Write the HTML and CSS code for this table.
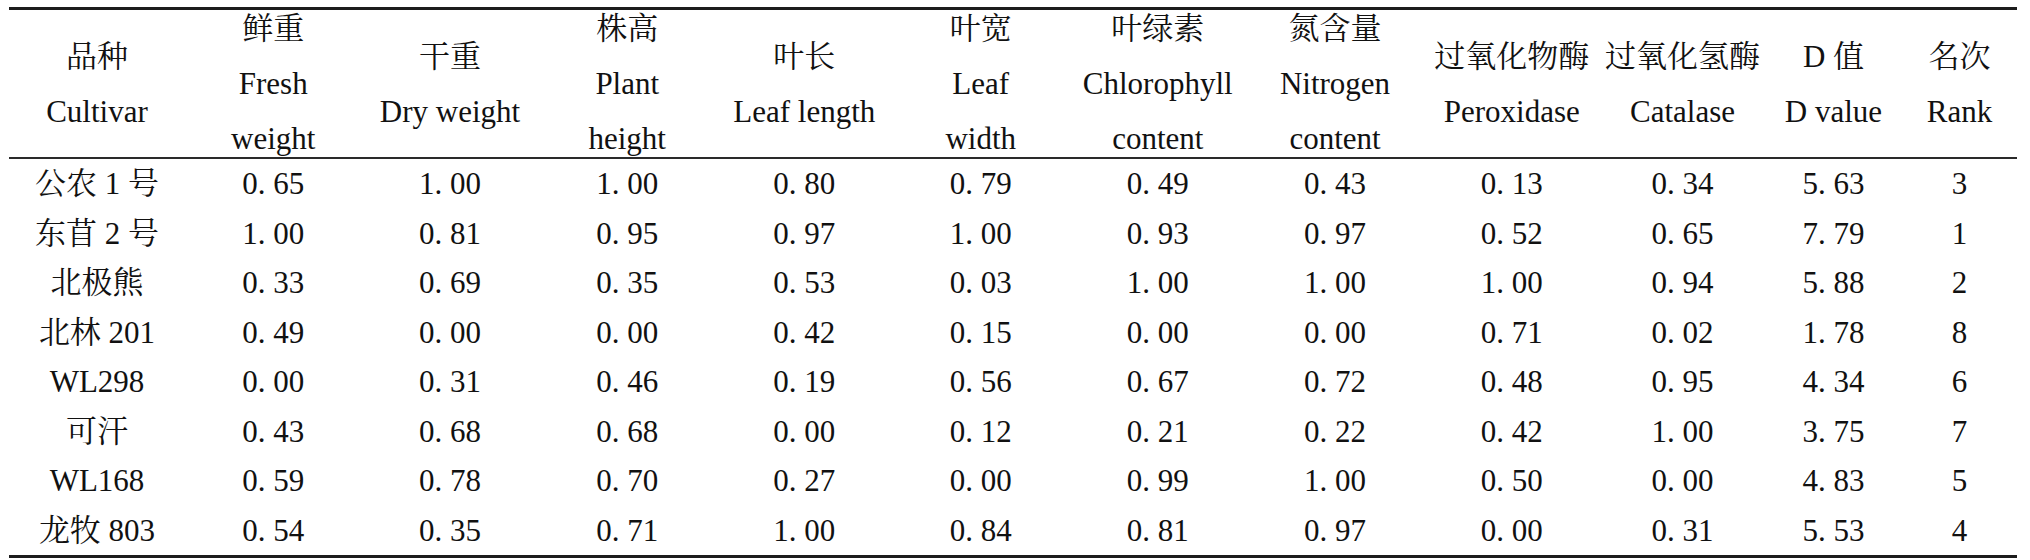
FILE: index.html
```html
<!DOCTYPE html>
<html>
<head>
<meta charset="utf-8">
<title>D值排名</title>
<link rel="stylesheet" href="styles.css">
</head>
<body>
<div class="table">
  <div class="row head">
    <div class="cell"><span>品种</span><span>Cultivar</span></div>
    <div class="cell"><span>鲜重</span><span>Fresh</span><span>weight</span></div>
    <div class="cell"><span>干重</span><span>Dry weight</span></div>
    <div class="cell"><span>株高</span><span>Plant</span><span>height</span></div>
    <div class="cell"><span>叶长</span><span>Leaf length</span></div>
    <div class="cell"><span>叶宽</span><span>Leaf</span><span>width</span></div>
    <div class="cell"><span>叶绿素</span><span>Chlorophyll</span><span>content</span></div>
    <div class="cell"><span>氮含量</span><span>Nitrogen</span><span>content</span></div>
    <div class="cell"><span>过氧化物酶</span><span>Peroxidase</span></div>
    <div class="cell"><span>过氧化氢酶</span><span>Catalase</span></div>
    <div class="cell"><span>D 值</span><span>D value</span></div>
    <div class="cell"><span>名次</span><span>Rank</span></div>
  </div>
  <div class="body">
    <div class="row"><div>公农 1 号</div><div>0. 65</div><div>1. 00</div><div>1. 00</div><div>0. 80</div><div>0. 79</div><div>0. 49</div><div>0. 43</div><div>0. 13</div><div>0. 34</div><div>5. 63</div><div>3</div></div>
    <div class="row"><div>东苜 2 号</div><div>1. 00</div><div>0. 81</div><div>0. 95</div><div>0. 97</div><div>1. 00</div><div>0. 93</div><div>0. 97</div><div>0. 52</div><div>0. 65</div><div>7. 79</div><div>1</div></div>
    <div class="row"><div>北极熊</div><div>0. 33</div><div>0. 69</div><div>0. 35</div><div>0. 53</div><div>0. 03</div><div>1. 00</div><div>1. 00</div><div>1. 00</div><div>0. 94</div><div>5. 88</div><div>2</div></div>
    <div class="row"><div>北林 201</div><div>0. 49</div><div>0. 00</div><div>0. 00</div><div>0. 42</div><div>0. 15</div><div>0. 00</div><div>0. 00</div><div>0. 71</div><div>0. 02</div><div>1. 78</div><div>8</div></div>
    <div class="row"><div>WL298</div><div>0. 00</div><div>0. 31</div><div>0. 46</div><div>0. 19</div><div>0. 56</div><div>0. 67</div><div>0. 72</div><div>0. 48</div><div>0. 95</div><div>4. 34</div><div>6</div></div>
    <div class="row"><div>可汗</div><div>0. 43</div><div>0. 68</div><div>0. 68</div><div>0. 00</div><div>0. 12</div><div>0. 21</div><div>0. 22</div><div>0. 42</div><div>1. 00</div><div>3. 75</div><div>7</div></div>
    <div class="row"><div>WL168</div><div>0. 59</div><div>0. 78</div><div>0. 70</div><div>0. 27</div><div>0. 00</div><div>0. 99</div><div>1. 00</div><div>0. 50</div><div>0. 00</div><div>4. 83</div><div>5</div></div>
    <div class="row"><div>龙牧 803</div><div>0. 54</div><div>0. 35</div><div>0. 71</div><div>1. 00</div><div>0. 84</div><div>0. 81</div><div>0. 97</div><div>0. 00</div><div>0. 31</div><div>5. 53</div><div>4</div></div>
  </div>
</div>
</body>
</html>
```
FILE: styles.css
```css
html, body {
  margin: 0;
  padding: 0;
  background: #ffffff;
}

body {
  color: #111111;
}

.table {
  font-family: "Liberation Serif", "Noto Serif CJK SC", serif;
  font-size: 31px;
  margin: 7px 0 0 9px;
  width: 2008px;
  border-top: 3px solid #1c1c1c;
  border-bottom: 3px solid #1c1c1c;
}

.row {
  display: grid;
  grid-template-columns: 176px 176.5px 177px 177.5px 176.5px 176.5px 177.5px 177px 176.5px 165px 137px 115px;
}

.head {
  height: 147px;
  grid-template-rows: 147px;
  border-bottom: 2px solid #2a2a2a;
}

.head .cell {
  display: flex;
  flex-direction: column;
  justify-content: center;
  align-items: center;
  line-height: 55px;
  white-space: nowrap;
}

.body .row {
  height: 49.5px;
  line-height: 49.5px;
  text-align: center;
  white-space: nowrap;
}
```
